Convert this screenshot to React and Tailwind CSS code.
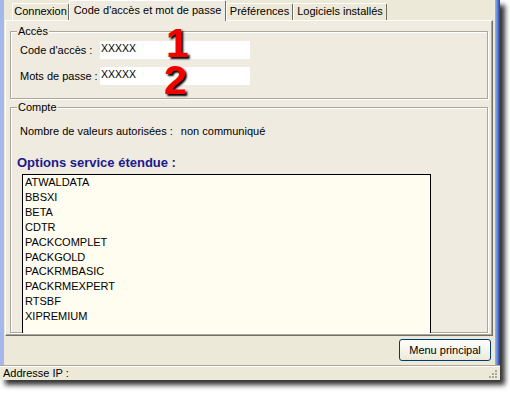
const tabs = [
  { label: 'Connexion', w: 57 },
  { label: "Code d'accès et mot de passe", w: 157, active: true },
  { label: 'Préférences', w: 67 },
  { label: 'Logiciels installés', w: 94 },
]

const options = [
  'ATWALDATA',
  'BBSXI',
  'BETA',
  'CDTR',
  'PACKCOMPLET',
  'PACKGOLD',
  'PACKRMBASIC',
  'PACKRMEXPERT',
  'RTSBF',
  'XIPREMIUM',
]

function Tab({ label, w, active }) {
  if (active) {
    return (
      <div
        style={{ width: w }}
        className="relative z-10 h-[21px] -mb-px bg-[#efebe0] border-t border-l border-white border-r border-r-[#716f64] rounded-t-[2px] flex items-start justify-center pt-[3px] whitespace-nowrap"
      >
        {label}
      </div>
    )
  }
  return (
    <div
      style={{ width: w }}
      className="h-[17px] bg-[#ece9d8] border-t border-l border-white border-r border-r-[#716f64] rounded-t-[2px] flex items-start justify-center pt-[1px] whitespace-nowrap"
    >
      {label}
    </div>
  )
}

function GroupBox({ title, className, children }) {
  return (
    <div className={`relative border border-[#aca899] shadow-[inset_1px_1px_0_#fff,1px_1px_0_#fff] ${className}`}>
      <span className="absolute -top-[7px] left-[6px] px-[1px] bg-[#efebe0] leading-[13px]">{title}</span>
      {children}
    </div>
  )
}

function Field({ label }) {
  return (
    <div className="flex items-center h-[18px]">
      <span className="w-[80px] whitespace-nowrap">{label}</span>
      <div className="w-[150px] h-[18px] bg-white leading-[13px] pl-[1px] pt-px text-[10.5px]">XXXXX</div>
    </div>
  )
}

export default function App() {
  return (
    <div className="w-[510px] h-[393px] bg-white overflow-hidden font-['Liberation_Sans',Arial,sans-serif] text-[11px] leading-[13px] text-black">
      <div className="w-[500px] h-[380px] flex flex-col shadow-[5px_5px_5px_rgba(0,0,0,0.8)]">
        <div className="flex flex-1 min-h-0">
          <div className="w-[4px] bg-[#a4b8ec]" />
          <div className="flex-1 bg-[#ece9d8] flex flex-col">
            <div className="h-[20px] flex items-end pl-[8px]">
              {tabs.map((t) => (
                <Tab key={t.label} {...t} />
              ))}
            </div>
            <div className="relative ml-px mr-[2px] h-[316px] bg-[#efebe0] border-t border-l border-white border-r border-b border-r-[#716f64] border-b-[#716f64] shadow-[inset_-1px_-1px_0_#aca899] px-[4px] pt-[10px] flex flex-col">
              <GroupBox title="Accès" className="h-[68px] pl-[9px] pt-[9px] flex flex-col gap-[8px]">
                <Field label="Code d'accès :" />
                <Field label="Mots de passe :" />
              </GroupBox>

              {/* red callout numbers over the form */}
              <span className="absolute left-[160px] top-[7px] text-[41px] leading-[30px] font-bold text-[#f20000] [text-shadow:2px_2px_2px_#000]">1</span>
              <span className="absolute left-[158px] top-[44px] text-[41px] leading-[30px] font-bold text-[#f20000] [text-shadow:2px_2px_2px_#000]">2</span>

              <GroupBox title="Compte" className="mt-[8px] flex-1 mb-[2px] flex flex-col">
                <div className="flex pl-[9px] pt-[17px] whitespace-nowrap">
                  <span>Nombre de valeurs autorisées :</span>
                  <span className="ml-[8px]">non communiqué</span>
                </div>
                <div className="pl-[6px] pt-[17px] text-[13px] leading-[15px] font-bold text-[#1a1a8c]">
                  Options service étendue :
                </div>
                <div className="relative z-10 ml-[11px] mt-[4px] w-[409px] flex-1 -mb-px bg-[#fffcf0] border-t border-l border-r border-black pl-[2px] overflow-hidden">
                  {options.map((o) => (
                    <div key={o} className="leading-[14.9px]">{o}</div>
                  ))}
                </div>
              </GroupBox>
            </div>
            <div className="flex-1 flex items-start justify-end pr-[4px] pt-[3px]">
              <button className="w-[92px] h-[22px] rounded-[3px] border border-[#003c74] bg-gradient-to-b from-white to-[#ece9d8] text-[11px]">
                Menu principal
              </button>
            </div>
          </div>
          <div className="w-[5px] bg-gradient-to-r from-[#9bb5f2] via-[#5b7fdc] to-[#243f8c]" />
        </div>
        <div className="h-[15px] bg-[#ece9d8] border-t border-[#aca899] shadow-[inset_0_1px_0_#fff] flex items-center pl-[3px] relative">
          <span>Addresse IP :</span>
          <div className="absolute right-[3px] bottom-[2px] grid grid-cols-3 gap-[1px]">
            <span />
            <span />
            <span className="w-[2px] h-[2px] bg-[#aca899]" />
            <span />
            <span className="w-[2px] h-[2px] bg-[#aca899]" />
            <span className="w-[2px] h-[2px] bg-[#aca899]" />
            <span className="w-[2px] h-[2px] bg-[#aca899]" />
            <span className="w-[2px] h-[2px] bg-[#aca899]" />
            <span className="w-[2px] h-[2px] bg-[#aca899]" />
          </div>
        </div>
      </div>
    </div>
  )
}
